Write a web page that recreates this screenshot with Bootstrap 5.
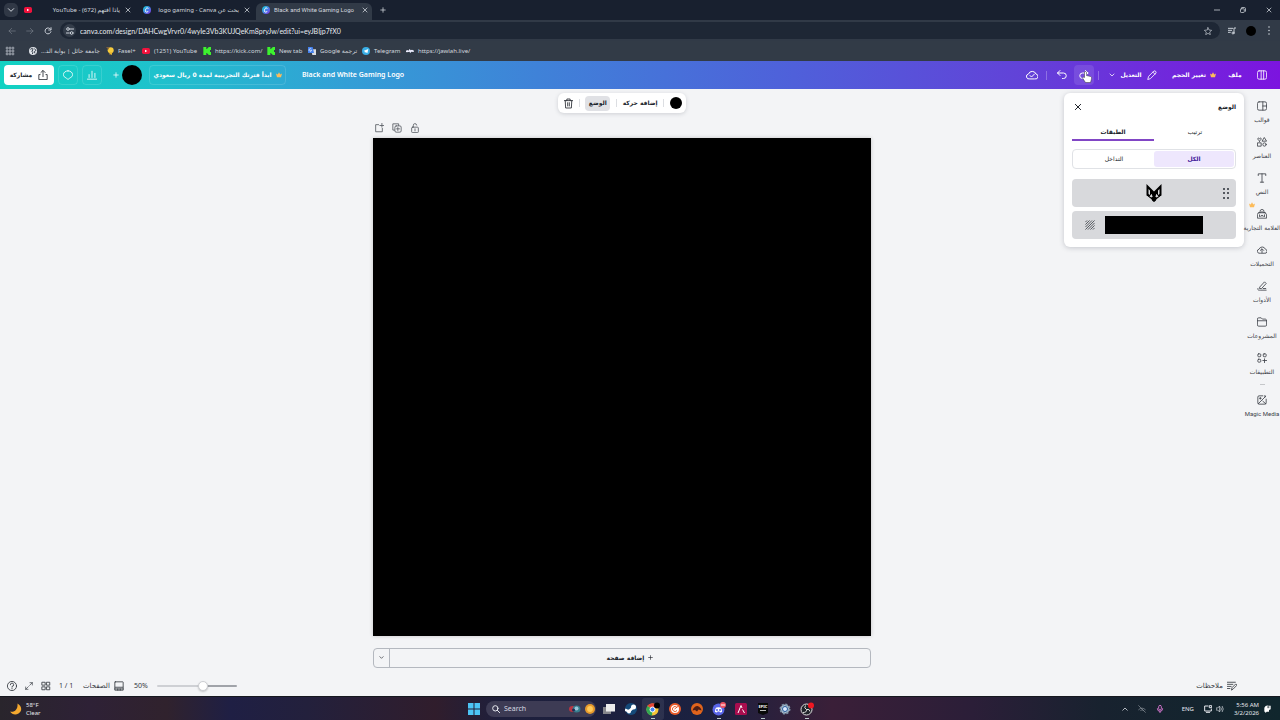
<!DOCTYPE html>
<html lang="en">
<head>
<meta charset="utf-8">
<meta name="viewport" content="width=device-width, initial-scale=1">
<title>Black and White Gaming Logo</title>
<link href="https://cdn.jsdelivr.net/npm/bootstrap@5.3.0/dist/css/bootstrap.min.css" rel="stylesheet">
<style>
body{font-family:"Noto Sans","DejaVu Sans",sans-serif;font-size:7px;line-height:10px;background:#f3f4f6;color:#20242b}
button,input{font:inherit;color:inherit}
button{background:none;border:0;padding:0;white-space:nowrap}
a{color:inherit;text-decoration:none;white-space:nowrap}
svg{display:block;flex:none}
.ln{fill:none;stroke:currentColor;stroke-width:2;stroke-linecap:round;stroke-linejoin:round}
.ln.bold{stroke-width:3}
.i5{width:5px;height:5px}.i6{width:6px;height:6px}.i8{width:8px;height:8px}.i10{width:10px;height:10px}.i12{width:12px;height:12px}.i14{width:14px;height:14px}
.ar{font-family:"DejaVu Sans",sans-serif;font-size:6px}
.ar-b{font-family:"DejaVu Sans",sans-serif;font-size:6px;font-weight:700}
.ar-l{font-family:"DejaVu Sans",sans-serif;font-size:7px}
.latin{font-family:Roboto,sans-serif}
.center{display:flex;align-items:center;justify-content:center}
/* browser window */
.tabstrip{background:#18202f;height:20px;color:#d3d8df;padding:0 4px 0 4px}
.tab-search{width:14px;height:14px;border-radius:5px;background:#303846}
.tab-item{width:119px;height:20px;padding:0 6px}
.tab-item.active{background:#313a47;border-radius:6px 6px 0 0;height:17px;align-self:flex-end;width:116px;padding:0 4px 3px 6px}
.tab-item.active .tab-name{text-align:left;padding:0 0 0 4px;text-overflow:clip}
.tab-name{flex:1;text-align:right;padding-right:5px;white-space:nowrap;overflow:hidden;font-size:6px}
.address{background:#313a47;height:21px;color:#c9cfd7}
.omnibox{background:#1e2735;border-radius:9px;height:17px;padding:0 8px 0 3px}
.site-info{width:13px;height:13px;border-radius:50%;background:#343d4a}
.omnibox input{background:none;border:0;outline:0;padding:0;color:#e8ebef;min-width:0;font-family:Lato,sans-serif}
.bookmarks{background:#323b47;height:20px;color:#d3d8df;padding-left:5px;font-size:6px}
.bookmarks a{display:flex;align-items:center;gap:4px}
.dot{border-radius:50%;background:#000}
/* editor header */
.topbar{height:28px;color:#fff;background:linear-gradient(90deg,#12d2c2 0,#1fc2cc 12%,#339fd6 27%,#3f82d8 42%,#4f60da 62%,#6242d8 80%,#7c14df 100%)}
.doc-name{font-weight:600}
.share{background:#fff;color:#20242b;width:50px;height:20px;border-radius:4px;gap:6px}
.ghost{height:20px;border:1px solid #ffffff22;border-radius:4px}
.topbar .sep{width:1px;height:9px;background:#ffffff44}
.hov{background:#ffffff1c;border-radius:4px}
/* workspace */
.workspace{padding-top:4px}
.floatbar{height:20px;background:#fff;border-radius:6px;width:128px;padding:0 4px 0 6px;box-shadow:0 1px 4px #3c405033}
.floatbar .sep{width:1px;height:8px;background:#dcdee2}
.chosen{background:#e0e1e5;border-radius:4px;width:25px;height:15px}
.sheet{width:40%}
.page-tools{height:25px;color:#555a62;gap:8px;padding:0 0 5px 1px}
.artboard{aspect-ratio:1;background:#000;box-shadow:0 0 4px #0003}
.add-page{height:20px;border:1px solid #b4b8bf;border-radius:4px;margin-top:12px}
.add-page .more{width:16px;border-right:1px solid #b4b8bf}
.footer-bar{height:20px;color:#34383f;padding:0 7px}
.range-zoom{appearance:none;width:80px;height:10px;background:none;margin:0}
.range-zoom::-webkit-slider-runnable-track{height:2px;border-radius:1px;background:linear-gradient(90deg,#ced0d4 58%,#a0a3a9 58%)}
.range-zoom::-webkit-slider-thumb{appearance:none;width:10px;height:10px;margin-top:-4px;border-radius:50%;background:#fff;border:1px solid #ccced2;box-shadow:0 1px 2px #0003}
/* position panel */
.layers{top:4px;right:0;width:180px;padding:8px;background:#fff;border-radius:6px;box-shadow:0 1px 5px #3c405040}
.layers .panel-head{height:12px}
.layers .tabs{margin-top:11px}
.layers .tabs button{height:17px;border-bottom:2px solid transparent}
.layers .tabs .on{border-color:#8146c5;font-weight:700}
.segment{border:1px solid #e0e2e6;border-radius:4px;height:20px;padding:1px;margin:8px 0 10px}
.segment .on{background:#eee7fd;color:#43209a;border-radius:3px;font-weight:700}
.layer{background:#d8d9dc;border-radius:4px;height:28px}
.grip{right:7px}
.hatch{left:13px}
.swatch{width:98px;height:18px;background:#000}
/* side rail */
.rail{width:36px;padding-top:8px;color:#3d4148}
.rail a{height:36px;padding-top:4px;display:flex;flex-direction:column;align-items:center;gap:4px;position:relative}
.rail hr{width:5px;margin:-1px auto 6px}
.crown{left:5px;top:-3px}
.pointer{left:8px;top:6px}
/* desktop task bar */
.taskbar{height:24px;color:#e6e8ee;font-size:6px;line-height:8px;border-top:1px solid #16181f;background:linear-gradient(90deg,#29252c 0,#2e2136 7%,#30222d 13%,#1f1f44 18%,#23203c 24%,#301d2c 34%,#1e1f3c 39%,#1b2140 55%,#3a1f38 65%,#2b1e38 76%,#18222f 86%,#10262d 100%)}
.weather{width:463px;padding-left:10px}
.tasksearch{width:110px;height:16px;border-radius:8px;background:#3d3b54;margin:0 2px 0 1px;padding:0 1px 0 6px}
.tasksearch input{background:none;border:0;outline:0;padding:0;min-width:0;color:#d7d9e2;font-size:7px}
.tasksearch input::placeholder{color:#d7d9e2;opacity:1}
.app{width:22px;height:22px;position:relative}
.app.open::after{content:"";position:absolute;left:9px;right:9px;bottom:1px;height:1px;background:#bcc}
.app.front{background:#ffffff14;border-radius:3px}
</style>
</head>
<body class="d-flex flex-column min-vh-100">
<svg width="0" height="0" class="position-absolute" aria-hidden="true">
<symbol id="x" viewBox="0 0 24 24"><path d="M4 4l16 16M20 4L4 20"/></symbol>
<symbol id="plus" viewBox="0 0 24 24"><path d="M12 3v18M3 12h18"/></symbol>
<symbol id="down" viewBox="0 0 24 24"><path d="M4 8l8 8 8-8"/></symbol>
<symbol id="yt" viewBox="0 0 24 24"><rect x="0" y="3" width="24" height="18" rx="5" fill="#f0123c" stroke="none"/><path d="M9 8l7 4-7 4z" fill="#fff" stroke="none"/></symbol>
<symbol id="canva" viewBox="0 0 24 24"><linearGradient id="cg" x1="0" y1="0" x2="1" y2="1"><stop offset="0" stop-color="#12cfd0"/><stop offset=".5" stop-color="#4487e8"/><stop offset="1" stop-color="#8a2be8"/></linearGradient><circle cx="12" cy="12" r="12" fill="url(#cg)" stroke="none"/><path d="M16 8c-1-3-5-3-7 0s-3 9 0 10 6-1 7-3" fill="none" stroke="#fff" stroke-width="3"/></symbol>
<symbol id="kick" viewBox="0 0 24 24"><path d="M1 0h9v6h3V3h3V0h8v9h-3v6h3v9h-8v-3h-3v-3h-3v6H1z" fill="#3df22f"/></symbol>
<symbol id="crown" viewBox="0 0 24 24"><path d="M0 6l7 4 5-9 5 9 7-4-4 15H4z" fill="#fdbc5a"/></symbol>
</svg>

<header>
<div class="tabstrip d-flex align-items-center">
<button class="tab-search center" aria-label="Search tabs"><svg class="ln bold i8"><use href="#down"/></svg></button>
<div class="tab-item d-flex align-items-center"><svg class="i8"><use href="#yt"/></svg><span class="tab-name" dir="ltr">YouTube - ياذا افتهم (672)</span><svg class="ln bold i6"><use href="#x"/></svg></div>
<div class="tab-item d-flex align-items-center"><svg class="i8"><use href="#canva"/></svg><span class="tab-name" dir="ltr">logo gaming - Canva بحث عن</span><svg class="ln bold i6"><use href="#x"/></svg></div>
<div class="tab-item active d-flex align-items-center"><svg class="i8"><use href="#canva"/></svg><span class="tab-name latin">Black and White Gaming Logo</span><svg class="ln bold i6"><use href="#x"/></svg></div>
<button class="ms-2" aria-label="New tab"><svg class="ln bold i6"><use href="#plus"/></svg></button>
<div class="d-flex ms-auto gap-3 align-items-center pe-1">
<svg class="ln bold i6" viewBox="0 0 24 24"><path d="M1 12h22"/></svg>
<svg class="ln bold i6 ms-1" viewBox="0 0 24 24"><rect x="2" y="7" width="15" height="15" rx="3"/><path d="M7 2h10q5 0 5 5v10"/></svg>
<svg class="ln bold i6 ms-1"><use href="#x"/></svg></div>
</div>
<div class="address d-flex align-items-center">
<div class="d-flex align-items-center ps-2" style="gap:10px">
<svg class="ln i8" viewBox="0 0 24 24" opacity=".45"><path d="M22 12H3M11 4l-8 8 8 8"/></svg>
<svg class="ln i8" viewBox="0 0 24 24" opacity=".45"><path d="M2 12h19M13 4l8 8-8 8"/></svg>
<svg class="ln bold i8" viewBox="0 0 24 24"><path d="M20 7a9 9 0 1 0 1 7M21 2v7h-7"/></svg></div>
<div class="omnibox d-flex flex-fill align-items-center ms-2 gap-1">
<span class="site-info center"><svg class="ln bold i8" viewBox="0 0 24 24"><path d="M13 6h10M1 18h9"/><circle cx="6" cy="6" r="4"/><circle cx="17" cy="18" r="4"/></svg></span>
<input class="flex-fill" aria-label="Address" value="canva.com/design/DAHCwgVrvr0/4wyIe3Vb3KUJQeKm8pryJw/edit?ui=eyJBIjp7fX0">
<svg class="ln i8" viewBox="0 0 24 24"><path d="M12 2l3 7 8 1-6 5 2 8-7-4-7 4 2-8-6-5 8-1z"/></svg></div>
<div class="d-flex align-items-center ms-2 pe-2" style="gap:10px">
<svg class="ln bold i8" viewBox="0 0 24 24"><path d="M1 4h13M1 10h10M1 16h6M18 18V3h5"/><circle cx="15" cy="18" r="3"/></svg>
<span class="dot i10"></span>
<svg width="6" height="9" viewBox="0 0 6 9" fill="currentColor"><circle cx="3" cy="1" r=".8"/><circle cx="3" cy="4.500" r=".8"/><circle cx="3" cy="8" r=".8"/></svg></div>
</div>
<nav class="bookmarks d-flex align-items-center">
<svg class="i10" viewBox="0 0 24 24" fill="none" stroke="#aab0b9" stroke-width="2"><path d="M3 3h4v4H3zM10 3h4v4h-4zM17 3h4v4h-4zM3 10h4v4H3zM10 10h4v4h-4zM17 10h4v4h-4zM3 17h4v4H3zM10 17h4v4h-4zM17 17h4v4h-4z"/></svg>
<a href="#" style="width:77px;margin-left:14px"><svg class="i8" viewBox="0 0 24 24"><circle cx="12" cy="12" r="12" fill="#dfe3e8"/><path d="M4 7l6-3 2 5-4 4 4 3-2 5M15 4l6 6-5 4 2 5" fill="none" stroke="#38414d" stroke-width="3"/></svg><span dir="rtl">جامعة حائل | بوابة الد...</span></a>
<a href="#" style="width:36px"><svg class="i8" viewBox="0 0 24 24"><circle cx="14" cy="10" r="9" fill="#f6cb3c"/><path d="M10 16h8v8l-4-2-3 1z" fill="#e9b52d"/><path d="M0 1h9v7z" fill="#98713c"/></svg>Fasel+</a>
<a href="#" style="width:61px"><svg class="i8"><use href="#yt"/></svg>(1251) YouTube</a>
<a href="#" style="width:64px"><svg class="i8"><use href="#kick"/></svg>https://kick.com/</a>
<a href="#" style="width:41px"><svg class="i8"><use href="#kick"/></svg>New tab</a>
<a href="#" style="width:54px"><svg class="i8" viewBox="0 0 24 24"><path d="M9 7h15v17H13z" fill="#d9dce1"/><path d="M0 0h14l4 18H0z" fill="#4380ed"/><path d="M10 6a4 4 0 1 0 1 4H7" fill="none" stroke="#fff" stroke-width="2"/></svg><span dir="ltr">Google ترجمة</span></a>
<a href="#" style="width:44px"><svg class="i8" viewBox="0 0 24 24"><circle cx="12" cy="12" r="12" fill="#38aee6"/><path d="M4 12l15-6-3 13-5-4-2 3-1-5z" fill="#fff"/></svg>Telegram</a>
<a href="#"><svg class="i8" viewBox="0 0 24 24" fill="#eef"><path d="M0 11l4-2 3 2 4-5 3 4 4-2 6 3-1 4-7-1-3 4-3-4-7 2-3-1z"/></svg>https://jawlah.live/</a>
</nav>
</header>

<div class="topbar d-flex align-items-center px-1">
<button class="share center"><span class="ar-b" dir="rtl">مشاركة</span><svg class="ln i10" viewBox="0 0 24 24"><path d="M12 16V2M7 6l5-5 5 5M5 11H2v12h20V11h-3"/></svg></button>
<button class="ghost center" style="width:20px;margin-left:4px" aria-label="Comments"><svg class="ln i10" viewBox="0 0 24 24"><path d="M12 2c6 0 11 4 11 9 0 4-3 7-7 8l-4 4-4-4c-4-1-7-4-7-8 0-5 5-9 11-9z"/></svg></button>
<button class="ghost center" style="width:20px;margin-left:4px" aria-label="Insights"><svg class="ln i10" viewBox="0 0 24 24"><path d="M1 22h22M5 18v-7M12 18V3M19 18V8"/></svg></button>
<button class="d-flex align-items-center" style="gap:3px;margin-left:11px" aria-label="Add member"><svg class="ln bold i6"><use href="#plus"/></svg><span class="dot" style="width:20px;height:20px"></span></button>
<button class="ghost center gap-1" style="width:137px;margin-left:7px"><span class="ar-b" dir="rtl">ابدأ فترتك التجريبية لمدة 0 ريال سعودي</span><svg class="i6"><use href="#crown"/></svg></button>
<span class="doc-name ms-3 text-nowrap">Black and White Gaming Logo</span>
<div class="d-flex align-items-center ms-auto">
<button aria-label="Saved"><svg class="ln i12" viewBox="0 0 24 24"><path d="M7 20a5 5 0 0 1-2-10 8 8 0 0 1 15 0 5 5 0 0 1-2 10zM8 13l3 3 6-6"/></svg></button>
<span class="sep" style="margin:0 8px"></span>
<button class="center" style="width:14px" aria-label="Undo"><svg class="ln i12" viewBox="0 0 24 24"><path d="M8 3L3 8l5 5M3 8h12a5 5 0 0 1 0 11h-2"/></svg></button>
<button class="center hov position-relative" style="width:20px;height:20px;margin-left:5px" aria-label="Redo"><svg class="ln i12" viewBox="0 0 24 24"><path d="M15 3l5 5-5 5M20 8H9a5 5 0 0 0 0 11h2"/></svg><svg class="pointer position-absolute" width="10" height="12" viewBox="0 0 20 24"><path d="M5 2q3-3 4 1v6l8 2q3 1 2 5l-2 7H7L1 14q1-3 4-1z" fill="#fff" stroke="#333" stroke-width="1"/></svg></button>
<span class="sep ms-1"></span>
<button class="center" style="width:60px;gap:5px;margin-left:4px"><svg class="ln bold i6"><use href="#down"/></svg><span class="ar-b" dir="rtl">التعديل</span><svg class="ln i10" viewBox="0 0 24 24"><path d="M2 22l2-7L17 2q5 0 5 5L9 20zM14 5l5 5"/></svg></button>
<button class="center gap-1" style="width:48px;margin-left:7px"><span class="ar-b" dir="rtl">تغيير الحجم</span><svg class="i6"><use href="#crown"/></svg></button>
<button class="ar-b center" style="width:18px;margin-left:8px" dir="rtl">ملف</button>
<button style="margin:0 9px 0 13px" aria-label="Side panel"><svg class="ln i10" viewBox="0 0 24 24"><rect x="1" y="2" width="22" height="20" rx="4"/><path d="M10 2v20M16 2v20"/></svg></button>
</div>
</div>

<div class="d-flex flex-fill">
<main class="workspace flex-fill position-relative d-flex flex-column align-items-center">
<div class="floatbar d-flex align-items-center justify-content-between">
<button aria-label="Delete"><svg class="ln" width="9" height="11" viewBox="0 0 22 26"><path d="M1 6h20M7 6V2h8v4M3 6l1 18h14l1-18M9 11v8M13 11v8"/></svg></button><span class="sep"></span>
<button class="chosen center ar-b" dir="rtl">الوضع</button><span class="sep"></span>
<button class="ar-b" dir="rtl">إضافة حركة</button><span class="sep"></span>
<button class="dot i12" aria-label="Colour"></button>
</div>
<div class="sheet">
<div class="page-tools d-flex align-items-end">
<button aria-label="Add page"><svg class="ln i10" viewBox="0 0 24 24"><path d="M11 4H4v17h16v-8M19 1v9M14 6h9"/></svg></button>
<button aria-label="Duplicate page"><svg class="ln i10" viewBox="0 0 24 24"><path d="M6 17H2V2h14v4"/><rect x="7" y="7" width="15" height="15" rx="3"/><path d="M14 11v7M11 14h7"/></svg></button>
<button aria-label="Lock page"><svg class="ln i10" viewBox="0 0 24 24"><rect x="4" y="10" width="16" height="13" rx="2"/><path d="M8 10V6a4 4 0 0 1 8-1M12 14v5"/></svg></button>
</div>
<div class="artboard" role="img" aria-label="Page 1"></div>
<div class="add-page d-flex">
<button class="more center" aria-label="More page types"><svg class="ln bold i5"><use href="#down"/></svg></button>
<button class="flex-fill center gap-1"><span class="ar-b" dir="rtl">إضافة صفحة</span><svg class="ln bold i5"><use href="#plus"/></svg></button>
</div>
</div>

<aside class="layers position-absolute">
<div class="panel-head d-flex justify-content-between align-items-center">
<button style="margin-left:2px" aria-label="Close"><svg class="ln bold i8"><use href="#x"/></svg></button><span class="ar-b" dir="rtl">الوضع</span></div>
<div class="tabs d-flex ar"><button class="col-6 on" dir="rtl">الطبقات</button><button class="col-6" dir="rtl">ترتيب</button></div>
<div class="segment d-flex ar"><button class="col-6" dir="rtl">التداخل</button><button class="col-6 on" dir="rtl">الكل</button></div>
<div class="layer center position-relative mb-1">
<svg width="16" height="18" viewBox="0 0 32 36"><path d="M1 0l15 15L31 0v23l-8 6-7 7-7-7-8-6z"/><path d="M5 10v10l3 2v-9zM27 10v10l-3 2v-9zM11 20l4 3-4 4-4-2zM21 20l-4 3 4 4 4-2zM1 23l10 8-1 5-9-6zM31 23l-10 8 1 5 9-6z" fill="#d8d9dc"/><path d="M12 17l4 5 4-5v6l-4 3-4-3z"/><circle cx="16" cy="31" r="4"/></svg>
<svg class="grip position-absolute" width="6" height="11" viewBox="0 0 6 11" fill="#555960"><path d="M0 0h2v2H0zM4 0h2v2H4zM0 4h2v2H0zM4 4h2v2H4zM0 9h2v2H0zM4 9h2v2H4z"/></svg></div>
<div class="layer center position-relative"><svg class="hatch i10 position-absolute" viewBox="0 0 24 24" stroke="#3f4349" stroke-width="2"><path d="M1 5l4-4M1 11L11 1M1 17L17 1M1 23L23 1M7 23L23 7M13 23l10-10M19 23l4-4"/></svg><span class="swatch"></span></div>
</aside>

<footer class="footer-bar d-flex align-items-center w-100 mt-auto">
<button aria-label="Help"><svg class="ln i10" viewBox="0 0 24 24"><circle cx="12" cy="12" r="11"/><path d="M8 9a4 4 0 1 1 4 4v2M12 18v1"/></svg></button>
<button style="margin-left:8px" aria-label="Full screen"><svg class="ln i8" viewBox="0 0 24 24"><path d="M14 10l8-8M15 2h7v7M10 14l-8 8M2 15v7h7"/></svg></button>
<button style="margin-left:8px" aria-label="Grid view"><svg class="ln i10" viewBox="0 0 24 24"><path d="M3 3h7v7H3zM14 3h7v7h-7zM3 14h7v7H3zM14 14h7v7h-7z"/></svg></button>
<span style="width:24px;margin-left:8px">1 / 1</span>
<button class="d-flex align-items-center gap-1"><span class="ar-l" dir="rtl">الصفحات</span><svg class="ln i10" viewBox="0 0 24 24"><rect x="2" y="2" width="20" height="13" rx="1"/><path d="M2 19h20M2 15v7h20v-7M9 19v3M15 19v3"/></svg></button>
<label for="zoom" style="width:23px;margin-left:10px">50%</label>
<input id="zoom" class="range-zoom" type="range" value="58">
<button class="d-flex align-items-center gap-1 ms-auto"><span class="ar-l" dir="rtl">ملاحظات</span><svg class="ln i10" viewBox="0 0 24 24"><path d="M20 3H1M1 8h13M1 13h9M1 18h6M11 21l1-5 9-9 3 3-9 9z"/></svg></button>
</footer>
</main>

<nav class="rail ar flex-shrink-0">
<a href="#"><svg class="ln i10" viewBox="0 0 24 24"><rect x="1" y="2" width="22" height="20" rx="4"/><path d="M14 2v20M14 12h9"/></svg><span dir="rtl">قوالب</span></a>
<a href="#"><svg class="ln i10" viewBox="0 0 24 24"><path d="M6 10C-1 5 2 0 6 4c4-4 7 1 0 6zM18 2l5 8H13zM2 14h8v8H2z"/><circle cx="18" cy="18" r="4"/></svg><span dir="rtl">العناصر</span></a>
<a href="#"><svg class="ln i10" viewBox="0 0 24 24"><path d="M3 6V2h18v4M12 2v20M8 22h8"/></svg><span dir="rtl">النص</span></a>
<a href="#"><svg class="crown i6 position-absolute"><use href="#crown"/></svg><svg class="ln i10" viewBox="0 0 24 24"><path d="M7 6a5 5 0 0 1 10 0M4 9h16l3 5v8H1v-8z"/><path d="M4 9q8-5 16 0M9 18a3 3 0 1 1 6 0M6 18v-4M18 18v-4"/></svg><span dir="rtl">العلامة التجارية</span></a>
<a href="#"><svg class="ln i10" viewBox="0 0 24 24"><path d="M7 20a5 5 0 0 1-2-10 8 8 0 0 1 15 0 5 5 0 0 1-2 10zM12 18v-8M8 13l4-4 4 4"/></svg><span dir="rtl">التحميلات</span></a>
<a href="#"><svg class="ln i10" viewBox="0 0 24 24"><path d="M7 14L18 2l4 4-11 12H7zM2 18c-2 5 4 4 7 4h13M15 18h6"/></svg><span dir="rtl">الأدوات</span></a>
<a href="#"><svg class="ln i10" viewBox="0 0 24 24"><path d="M1 9h22v10q0 3-3 3H4q-3 0-3-3V5q0-3 3-3h6l3 3h7q3 0 3 4"/></svg><span dir="rtl">المشروعات</span></a>
<a href="#"><svg class="ln i10" viewBox="0 0 24 24"><rect x="2" y="2" width="7" height="7" rx="2"/><rect x="15" y="2" width="7" height="7" rx="2"/><rect x="2" y="15" width="7" height="7" rx="2"/><path d="M18 14v9M14 18h9"/></svg><span dir="rtl">التطبيقات</span></a>
<hr>
<a href="#"><svg class="ln i10" viewBox="0 0 24 24"><path d="M14 2H5Q2 2 2 5v14q0 3 3 3h14q3 0 3-3v-9M3 21L21 3M8 6v4M6 8h4M14 15l7 6M19 1v4"/></svg><span class="latin">Magic Media</span></a>
</nav>
</div>

<div class="taskbar d-flex align-items-center">
<div class="weather d-flex align-items-center gap-1"><svg class="i12" viewBox="0 0 24 24"><path d="M15 1c9 5 10 15 2 20-6 4-13 2-17-4 10 2 16-5 15-16z" fill="#f5a92f"/></svg><div>58°F<br>Clear</div></div>
<button class="app center" aria-label="Start"><svg class="i12" viewBox="0 0 24 24" fill="#4cc4f5"><path d="M0 0h11v11H0zM13 0h11v11H13zM0 13h11v11H0zM13 13h11v11H13z"/></svg></button>
<div class="tasksearch d-flex align-items-center gap-1"><svg class="ln bold i8" viewBox="0 0 24 24"><circle cx="10" cy="10" r="8"/><path d="M16 16l7 7"/></svg><input class="flex-fill" aria-label="Search" placeholder="Search"><svg width="12" height="8" viewBox="0 0 24 16"><ellipse cx="7" cy="8" rx="7" ry="6" fill="#b93542"/><ellipse cx="15" cy="8" rx="8" ry="7" fill="#377d8e"/><circle cx="15" cy="7" r="4" fill="#9bc5d8"/><circle cx="9" cy="10" r="3" fill="#202b55"/></svg><svg class="i10" viewBox="0 0 24 24"><circle cx="12" cy="12" r="12" fill="#e69a2c"/><circle cx="12" cy="12" r="7" fill="#ffc957"/></svg></div>
<button class="app center" aria-label="Task view"><svg class="i12" viewBox="0 0 24 24"><path d="M0 8h16v14H0z" fill="#85868b"/><path d="M6 2h18v15H6z" fill="#ececec"/></svg></button>
<button class="app center" aria-label="Steam"><svg class="i12" viewBox="0 0 24 24"><circle cx="12" cy="12" r="12" fill="#154a7a"/><path d="M0 13l8 4 8-8" stroke="#fff" stroke-width="5" fill="none"/><circle cx="17" cy="8" r="5" fill="#fff"/><circle cx="8" cy="17" r="4" fill="#fff"/></svg></button>
<button class="app open front center" aria-label="Chrome"><svg class="i14" viewBox="0 0 28 28"><circle cx="13" cy="15" r="12" fill="#f6c637"/><path d="M13 15L3 8a12 12 0 0 1 20 0z" fill="#e24537"/><path d="M13 15L3 8a12 12 0 0 0 9 19z" fill="#32a853"/><circle cx="13" cy="15" r="5" fill="#4285f4" stroke="#fff" stroke-width="2"/><circle cx="22" cy="7" r="6"/></svg></button>
<button class="app center" aria-label="Cleaner"><svg class="i12" viewBox="0 0 24 24"><circle cx="12" cy="12" r="12" fill="#e85b2a"/><circle cx="12" cy="12" r="8" fill="#fff"/><path d="M16 9a5 5 0 1 0 0 6M11 12l8-6" fill="none" stroke="#e85b2a" stroke-width="2"/></svg></button>
<button class="app center" aria-label="Game launcher"><svg class="i12" viewBox="0 0 24 24"><circle cx="12" cy="12" r="12" fill="#e0641c"/><path d="M3 15q3-9 10-9 7 2 8 9l-6-2-3 4-4-3z" fill="#4d1d14"/></svg></button>
<button class="app open center" aria-label="Discord"><svg class="i14" viewBox="0 0 28 28"><circle cx="13" cy="15" r="12" fill="#5966e9"/><path d="M6 20q0-8 3-9 4-1 8 0 3 1 3 9l-4 1-1-2h-4l-1 2z" fill="#fff"/><circle cx="10" cy="16" r="2" fill="#5966e9"/><circle cx="16" cy="16" r="2" fill="#5966e9"/><circle cx="22" cy="6" r="6" fill="#ee5361"/><path d="M18 6h8" stroke="#fff" stroke-width="2"/></svg></button>
<button class="app center" aria-label="Alight"><svg class="i12" viewBox="0 0 24 24"><rect width="24" height="24" rx="3" fill="#a80d4e"/><path d="M6 20l6-15 2 5M15 13l4 7" fill="none" stroke="#fff" stroke-width="2"/></svg></button>
<button class="app open center" aria-label="Epic Games"><svg class="i12" viewBox="0 0 24 24"><path d="M2 0h20v20l-10 4-10-4z" fill="#090909"/><text x="3" y="10" font-size="8" font-weight="700" fill="#fff">EPIC</text><path d="M6 15h12" stroke="#bbb" stroke-width="2"/></svg></button>
<button class="app center" aria-label="Settings"><svg class="i12" viewBox="0 0 24 24"><circle cx="12" cy="12" r="9" fill="#a9bdce" stroke="#8097ab" stroke-width="4" stroke-dasharray="4 3"/><circle cx="12" cy="12" r="5" fill="#dceaff" stroke="#285b9b" stroke-width="2"/></svg></button>
<button class="app open center" aria-label="OBS"><svg class="i14" viewBox="0 0 28 28"><circle cx="13" cy="15" r="11" fill="#20242b" stroke="#ddd" stroke-width="2"/><path d="M13 15q-6-3-2-8M13 15q6-2 7 4M13 15q1 6-7 6" fill="none" stroke="#ddd" stroke-width="2"/><circle cx="22" cy="7" r="6" fill="#ef1722"/></svg></button>
<div class="d-flex align-items-center ms-auto" style="gap:10px;padding-right:9px">
<svg class="ln bold i6" viewBox="0 0 24 24"><path d="M3 17l9-9 9 9"/></svg>
<svg class="ln i8" viewBox="0 0 24 24" opacity=".6"><path d="M2 2l20 20M2 14q10-10 20 0M8 16q4-4 8 0"/></svg>
<svg class="ln bold i8 me-2" viewBox="0 0 24 24" style="color:#cc72c8"><rect x="8" y="1" width="8" height="14" rx="4"/><path d="M4 11q0 8 8 8t8-8M12 19v4"/></svg>
<span>ENG</span>
<div class="d-flex gap-1"><svg class="ln bold i8" viewBox="0 0 24 24"><path d="M12 3H2v15h20v-6M7 22h10M17 2h6v6h-6z"/></svg><svg class="ln i8" viewBox="0 0 24 24"><path d="M1 9h4l6-6v18l-6-6H1zM15 8q3 4 0 8M19 4q6 8 0 16"/></svg></div>
<div class="d-flex align-items-center gap-1"><div class="text-end text-nowrap">5:56 AM<br>3/2/2026</div><svg class="i8" viewBox="0 0 24 24" fill="#fff"><path d="M4 20V8q4-8 12-6h7v11l-5 2v5h-7l-3 4-2-4z"/><path d="M13 8h6M13 5h6" stroke="#18262c" stroke-width="2"/></svg></div>
</div>
</div>
<script src="https://cdn.jsdelivr.net/npm/bootstrap@5.3.0/dist/js/bootstrap.bundle.min.js"></script>
</body>
</html>
